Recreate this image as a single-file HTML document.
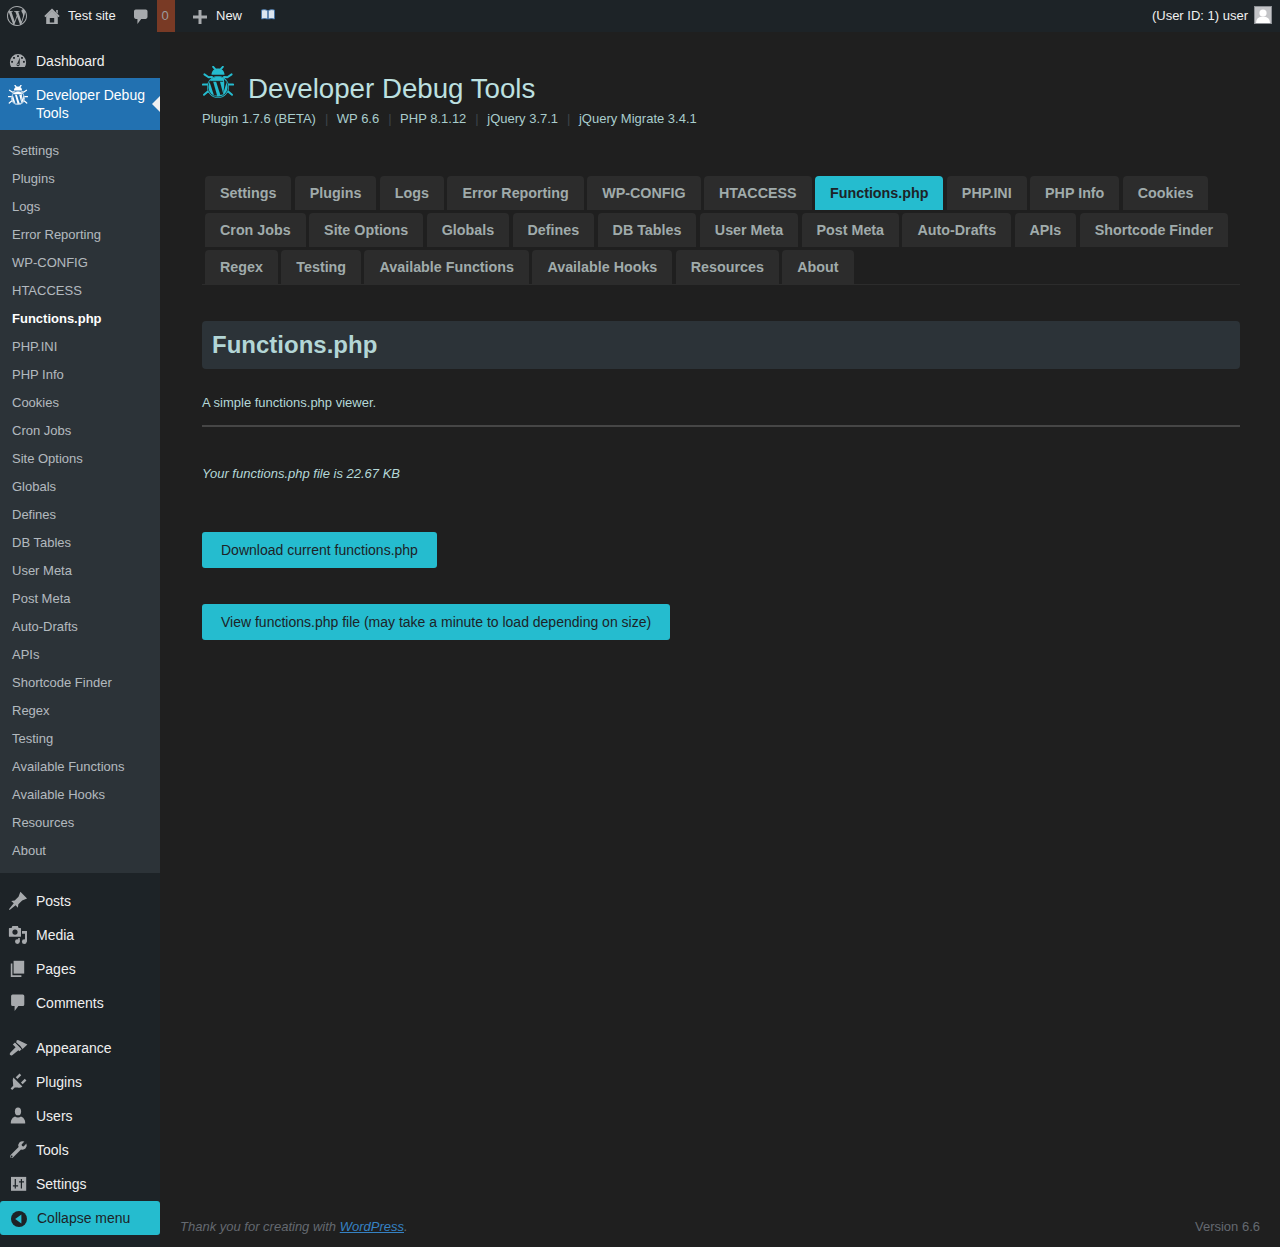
<!DOCTYPE html>
<html><head><meta charset="utf-8">
<style>
*{box-sizing:border-box;margin:0;padding:0}
html,body{width:1280px;height:1247px;overflow:hidden;background:#1f1f1f;font-family:"Liberation Sans",sans-serif;font-size:13px;color:#c3c4c7}
#bar{position:absolute;left:0;top:0;width:1280px;height:32px;background:#1d2327;color:#f0f0f0;font-size:13px}
#bar .t{position:absolute;top:0;line-height:32px;white-space:nowrap}
#bar svg{position:absolute}
#side{position:absolute;left:0;top:32px;width:160px;height:1215px;background:#1d2327}
.mi{position:absolute;left:0;width:160px;height:34px;color:#f0f0f0;font-size:14px;line-height:18px}
.mi .n{position:absolute;left:36px;top:8px;white-space:nowrap}
.mi svg{position:absolute;left:8px;top:7px;width:20px;height:20px}
#cur{position:absolute;left:0;top:78px;width:160px;height:52px;background:#2271b1;color:#fff;font-size:14px;line-height:18px}
#cur .n{position:absolute;left:36px;top:8px;width:120px}
#cur .arrow{position:absolute;right:0;top:18px;width:0;height:0;border:8px solid transparent;border-right-color:#f0f0f1}
#sub{position:absolute;left:0;top:130px;width:160px;height:743px;background:#2c3338}
#sub a{position:absolute;left:12px;display:block;font-size:13px;line-height:18px;color:rgba(240,246,252,.7);white-space:nowrap;text-decoration:none}
#sub a.on{color:#fff;font-weight:600}
#collapse{position:absolute;left:0;top:1201px;width:160px;height:34px;background:#25bccf;border-radius:3px;color:#1d2327;font-size:14px}
#collapse .n{position:absolute;left:37px;top:7.5px;line-height:18px}
#wrap{position:absolute;left:202px;top:32px;width:1038px}
h1.title{position:absolute;left:46px;top:39px;font-size:27.7px;font-weight:400;color:#bde0e0;line-height:36px;white-space:nowrap}
.ver{position:absolute;left:0;top:78px;font-size:13px;color:#a9cdcd;white-space:nowrap;line-height:18px}
.ver .sep{color:#3c434a;margin:0 8.5px 0 9px}
.tabs{position:absolute;left:0;top:144px;width:1038px;height:109px;border-bottom:1px solid #2c2c2c}
.trow{height:34px;margin-bottom:3px;padding-left:3px;display:flex;gap:3.4px}
.trow:last-child{margin-bottom:0}
.tab{position:relative;height:34px;background:#2c2c2c;border-radius:4px 4px 0 0;color:#a0abab;font-weight:700;font-size:14.3px;line-height:34px;padding:0 15px;white-space:nowrap}
.tab.on{background:#25bccf;color:#1d2327}
.hbox{position:absolute;left:0;top:289px;width:1038px;height:48px;background:#2c3338;border-radius:4px}
.hbox h2{position:absolute;left:10px;top:0;line-height:48px;font-size:24px;font-weight:700;color:#b3d6d6}
.desc{position:absolute;left:0;top:362px;line-height:18px;color:#b4d8d8;font-size:13px}
.hr{position:absolute;left:0;top:393px;width:1038px;height:2px;background:#464646}
.size{position:absolute;left:0;top:433px;line-height:18px;font-style:italic;color:#b4d8d8;font-size:13px}
.btn{position:absolute;left:0;height:36px;background:#25bccf;color:#1d2327;font-size:14px;line-height:36px;padding:0 19px;border-radius:3px;white-space:nowrap}
#foot{position:absolute;left:180px;top:1218px;width:1080px;line-height:18px;font-size:13px;color:#646970}
#foot i a{color:#3582c4;text-decoration:underline}
#foot .v{position:absolute;right:0;top:0}
</style></head><body>
<div id="bar">
  <svg style="left:7px;top:6px" width="20" height="20" viewBox="0 0 24 24"><path fill="#a7aaad" d="M21.469 6.825c.84 1.537 1.318 3.3 1.318 5.175 0 3.979-2.156 7.456-5.363 9.325l3.295-9.527c.615-1.54.82-2.771.82-3.864 0-.405-.026-.78-.07-1.11m-7.981.105c.647-.03 1.232-.105 1.232-.105.582-.075.514-.93-.067-.899 0 0-1.755.135-2.88.135-1.064 0-2.850-.15-2.85-.15-.585-.03-.661.855-.075.885 0 0 .54.061 1.125.09l1.68 4.605-2.37 7.08L5.354 6.9c.649-.03 1.234-.1 1.234-.1.585-.075.516-.93-.065-.896 0 0-1.746.138-2.874.138-.2 0-.438-.008-.69-.015C4.911 3.150 8.235 1.215 12 1.215c2.809 0 5.365 1.072 7.286 2.833-.046-.003-.091-.009-.141-.009-1.06 0-1.812.923-1.812 1.914 0 .89.513 1.643 1.06 2.531.411.72.89 1.643.89 2.977 0 .915-.354 1.994-.821 3.479l-1.075 3.585-3.9-11.61.001.014zM12 22.784c-1.059 0-2.081-.153-3.048-.437l3.237-9.406 3.315 9.087c.024.053.05.101.078.149-1.12.393-2.325.609-3.582.609M1.211 12c0-1.564.336-3.05.935-4.39L7.29 21.709C3.694 19.96 1.212 16.271 1.211 12M12 0C5.385 0 0 5.385 0 12s5.385 12 12 12 12-5.385 12-12S18.615 0 12 0"/></svg>
  <svg style="left:44px;top:8px" width="16" height="16" viewBox="0 0 16 16"><path d="M0.9 8.6 L8 1.6 L15.1 8.6" fill="none" stroke="#a7aaad" stroke-width="1.7"/><path d="M12.2 2 H13.8 V5.8 L12.2 4.3Z" fill="#a7aaad"/><path d="M2.2 8.2 L8 2.6 L13.8 8.2 V16 H2.2Z M5.8 10 V14.6 H10.2 V10Z" fill="#a7aaad" fill-rule="evenodd"/></svg>
  <span class="t" style="left:68px">Test site</span>
  <svg style="left:134px;top:9px" width="13.5" height="15.5" viewBox="0 0 15 16"><path d="M2 0 H13 Q15 0 15 2 V8.4 Q15 10.4 13 10.4 H8 L3.8 16 V10.4 H2 Q0 10.4 0 8.4 V2 Q0 0 2 0Z" fill="#a7aaad"/></svg>
  <div style="position:absolute;left:157px;top:0;width:18px;height:32px;background:#793a25"></div>
  <span class="t" style="left:161.5px;color:#9a9c9f">0</span>
  <svg style="left:193px;top:10px" width="14" height="14" viewBox="0 0 14 14"><path d="M5.5 0h3v5.5H14v3H8.5V14h-3V8.5H0v-3h5.5z" fill="#a7aaad"/></svg>
  <span class="t" style="left:216px">New</span>
  <svg style="left:261px;top:9px" width="14" height="11" viewBox="0 0 14 11"><path d="M0.5 1 Q3.5 0 6.8 1.5 L6.8 10 Q3.5 9 0.5 10Z M7.2 1.5 Q10.5 0 13.5 1 L13.5 10 Q10.5 9 7.2 10Z" fill="#dce6f0" stroke="#3a6ea8" stroke-width="0.8"/></svg>
  <span class="t" style="right:32px">(User ID: 1) user</span>
  <div style="position:absolute;left:1254px;top:6px;width:18px;height:18px;background:#c3c4c7;border:1px solid #8c8f94"><svg width="16" height="16" viewBox="0 0 16 16"><circle cx="8" cy="6" r="3.6" fill="#fff"/><path d="M1 16 Q1 9.5 8 9.5 Q15 9.5 15 16Z" fill="#fff"/></svg></div>
</div>

<div id="side">
  <div class="mi" style="top:12px"><svg viewBox="0 0 20 20"><path fill="#a7aaad" d="M3.2 16 H16.8 Q18.1 13.9 18.1 11.2 A8.1 8.1 0 0 0 1.9 11.2 Q1.9 13.9 3.2 16Z"/><g fill="#1d2327"><rect x="9.1" y="4.2" width="1.8" height="1.8"/><rect x="5.1" y="6" width="1.8" height="1.8"/><rect x="13.1" y="6" width="1.8" height="1.8"/><rect x="3.2" y="9.9" width="1.8" height="1.8"/><rect x="15" y="9.9" width="1.8" height="1.8"/><path d="M11.9 6.6 L11.6 14 Q11 15.4 9.8 15.2 Q8.4 14.9 8.6 13.4 Q8.9 12.4 9.8 11.6Z"/></g><circle cx="10" cy="13.4" r="0.8" fill="#a7aaad"/></svg><span class="n">Dashboard</span></div>
</div>
<div id="cur"><svg style="position:absolute;left:8px;top:7px" width="20" height="20" viewBox="0 0 32 32"><g stroke="#fff" stroke-width="2" stroke-linecap="round" stroke-linejoin="round" fill="none"><path d="M11.2 0.8 L13.4 3.4"/><path d="M20.8 0.8 L18.6 3.4"/><path d="M2.4 8.4 L6.6 11.3 L10 11"/><path d="M29.6 8.4 L25.4 11.3 L22 11"/><path d="M0.8 18.6 L5.4 18.6"/><path d="M26.6 18.6 L31.2 18.6"/><path d="M2 28.8 L5.8 25.6 L8 26"/><path d="M30 28.8 L26.2 25.6 L24 26"/></g><path d="M9.5 8.8 C9.5 4.6 12.4 2.4 16 2.4 C19.6 2.4 22.5 4.6 22.5 8.8 Z" fill="#fff"/><g transform="translate(5 10) scale(0.9167)"><circle cx="12" cy="12" r="12" fill="#fff"/><circle cx="12" cy="12" r="10.9" fill="none" stroke="#2271b1" stroke-width="0.8"/><path d="M2.9 5.3 A11.3 11.3 0 0 1 21.1 5.3Z" fill="#fff"/><path d="M3.4 5.3 H17.6 V6.2 H3.4Z" fill="#2271b1"/><path d="M2.6 5.6 L6.6 5.6 L11 21.4 L7.6 21.2Z" fill="#2271b1"/><path d="M9.8 5.8 L14 5.8 L17.8 20 L14.6 20.6Z" fill="#2271b1"/><path d="M18.4 3.4 C19.6 4.2 21 6 21.2 7.6 L17.6 19.4 C18.6 14 19.4 9 18.4 3.4Z" fill="#2271b1"/></g></svg><span class="n">Developer Debug Tools</span><div class="arrow"></div></div>
<div id="sub">
  <a style="top:12px">Settings</a>
  <a style="top:40px">Plugins</a>
  <a style="top:68px">Logs</a>
  <a style="top:96px">Error Reporting</a>
  <a style="top:124px">WP-CONFIG</a>
  <a style="top:152px">HTACCESS</a>
  <a class="on" style="top:180px">Functions.php</a>
  <a style="top:208px">PHP.INI</a>
  <a style="top:236px">PHP Info</a>
  <a style="top:264px">Cookies</a>
  <a style="top:292px">Cron Jobs</a>
  <a style="top:320px">Site Options</a>
  <a style="top:348px">Globals</a>
  <a style="top:376px">Defines</a>
  <a style="top:404px">DB Tables</a>
  <a style="top:432px">User Meta</a>
  <a style="top:460px">Post Meta</a>
  <a style="top:488px">Auto-Drafts</a>
  <a style="top:516px">APIs</a>
  <a style="top:544px">Shortcode Finder</a>
  <a style="top:572px">Regex</a>
  <a style="top:600px">Testing</a>
  <a style="top:628px">Available Functions</a>
  <a style="top:656px">Available Hooks</a>
  <a style="top:684px">Resources</a>
  <a style="top:712px">About</a>
</div>
<div class="mi" style="top:884px"><svg viewBox="0 0 20 20"><path transform="translate(1.3 18.6) rotate(-45)" fill="#a7aaad" d="M0 -0.5 L7.6 -1.3 L7.4 -4.7 L10.2 -2.6 L15.6 -2.6 L20.4 -4.7 L20.4 4.7 L15.6 2.6 L10.2 2.6 L7.4 4.7 L7.6 1.3 L0 0.5Z"/></svg><span class="n">Posts</span></div>
<div class="mi" style="top:918px"><svg viewBox="0 0 20 20"><g fill="#a7aaad"><path d="M0.9 3.6 Q0.9 3 1.5 3 H3.6 L4.4 0.9 H9.9 L10.6 3 H12.4 Q13 3 13 3.6 V11.2 Q13 11.8 12.4 11.8 H1.5 Q0.9 11.8 0.9 11.2Z"/><circle cx="7" cy="7.1" r="2.6" fill="#1d2327"/><path d="M14 5.9 H19 V16.8 H17 V8.7 H14Z"/><circle cx="16.3" cy="16.7" r="2.4"/><circle cx="9.4" cy="16.6" r="2.4"/><path d="M10.2 13 H11.8 V16.6 H10.2Z"/></g></svg><span class="n">Media</span></div>
<div class="mi" style="top:952px"><svg viewBox="0 0 20 20"><g fill="#a7aaad"><rect x="5.6" y="1.8" width="10.6" height="12.8"/><path d="M2.8 4.6 H4.4 V16.2 H13.4 V18 H2.8Z"/></g></svg><span class="n">Pages</span></div>
<div class="mi" style="top:986px"><svg viewBox="0 0 20 20"><path fill="#a7aaad" d="M4.6 1.6 H14.8 Q16.3 1.6 16.3 3.1 V11.6 Q16.3 13.1 14.8 13.1 H10.4 L6.6 18 V13.1 H4.6 Q3.1 13.1 3.1 11.6 V3.1 Q3.1 1.6 4.6 1.6Z"/></svg><span class="n">Comments</span></div>
<div class="mi" style="top:1031px"><svg viewBox="0 0 20 20"><g fill="#a7aaad"><path d="M8.6 2.4 Q9.4 1.8 10.6 2.2 L19.4 6.4 L14.4 11.2 Q12.6 7.4 8.2 4.4Z"/><path d="M4.8 6.6 L7 4.6 L13.6 11.2 L11.4 13.2 L10.4 12.3 L4.2 17.2 Q2.4 17.8 1.8 16.6 Q1.4 15.6 2.4 14.4 L7.6 9.3Z"/><path d="M7.4 4.2 L14.2 11" stroke="#1d2327" stroke-width="0.9"/></g></svg><span class="n">Appearance</span></div>
<div class="mi" style="top:1065px"><svg viewBox="0 0 20 20"><g fill="#a7aaad"><path d="M12.4 2.4 L8.6 6.2 M17.6 7.6 L13.8 11.4" stroke="#a7aaad" stroke-width="2.4"/><path d="M5.4 5.6 L14.4 14.6 Q12.4 16.4 9.6 15.6 L6.8 15.4 L4.2 18 L2.6 16.4 L5.2 13.8 L5 11 Q4.2 8 5.4 5.6Z"/></g></svg><span class="n">Plugins</span></div>
<div class="mi" style="top:1099px"><svg viewBox="0 0 20 20"><g fill="#a7aaad"><ellipse cx="10" cy="5.4" rx="3.1" ry="3.9"/><path d="M2.8 17.6 Q2.6 15.8 3.2 14.2 Q4.4 11.2 7 10.6 Q8.4 11.6 10 11.6 Q11.6 11.6 13 10.6 Q15.6 11.2 16.8 14.2 Q17.4 15.8 17.2 17.6Z"/></g></svg><span class="n">Users</span></div>
<div class="mi" style="top:1133px"><svg viewBox="0 0 20 20"><path fill="#a7aaad" d="M16.4 1.6 L13.6 4.4 L14 6 L15.6 6.4 L18.4 3.6 Q19.6 6.4 17.4 8.6 Q15.6 10.2 13 9.4 L5 17.4 Q3.6 18.6 2.4 17.6 Q1.4 16.4 2.6 15 L10.6 7 Q9.8 4.4 11.4 2.6 Q13.6 0.4 16.4 1.6Z M3.6 15.6 a0.9 0.9 0 1 0 0.01 0Z"/></svg><span class="n">Tools</span></div>
<div class="mi" style="top:1167px"><svg viewBox="0 0 20 20"><g><rect x="3" y="2.9" width="15.2" height="13.9" fill="#a7aaad"/><path d="M7.3 5 V14.6 M4.9 11.8 H10.1 M13.4 5 V14.6 M11 7.9 H16" stroke="#1d2327" stroke-width="1.2"/></g></svg><span class="n">Settings</span></div>
<div id="collapse"><svg style="position:absolute;left:11px;top:10px" width="16" height="16" viewBox="0 0 16 16"><circle cx="8" cy="8" r="8" fill="#1d2327"/><path d="M4.2 7.9 L10.4 3.4 V12.4Z" fill="#25bccf"/></svg><span class="n">Collapse menu</span></div>

<div id="wrap">
  <svg style="position:absolute;left:0;top:34px" width="32" height="32" viewBox="0 0 32 32"><g stroke="#25bccf" stroke-width="2" stroke-linecap="round" stroke-linejoin="round" fill="none"><path d="M11.2 0.8 L13.4 3.4"/><path d="M20.8 0.8 L18.6 3.4"/><path d="M2.4 8.4 L6.6 11.3 L10 11"/><path d="M29.6 8.4 L25.4 11.3 L22 11"/><path d="M0.8 18.6 L5.4 18.6"/><path d="M26.6 18.6 L31.2 18.6"/><path d="M2 28.8 L5.8 25.6 L8 26"/><path d="M30 28.8 L26.2 25.6 L24 26"/></g><path d="M9.5 8.8 C9.5 4.6 12.4 2.4 16 2.4 C19.6 2.4 22.5 4.6 22.5 8.8 Z" fill="#25bccf"/><g transform="translate(5 10) scale(0.9167)"><circle cx="12" cy="12" r="12" fill="#25bccf"/><circle cx="12" cy="12" r="10.9" fill="none" stroke="#1f1f1f" stroke-width="0.8"/><path d="M2.9 5.3 A11.3 11.3 0 0 1 21.1 5.3Z" fill="#25bccf"/><path d="M3.4 5.3 H17.6 V6.2 H3.4Z" fill="#1f1f1f"/><path d="M2.6 5.6 L6.6 5.6 L11 21.4 L7.6 21.2Z" fill="#1f1f1f"/><path d="M9.8 5.8 L14 5.8 L17.8 20 L14.6 20.6Z" fill="#1f1f1f"/><path d="M18.4 3.4 C19.6 4.2 21 6 21.2 7.6 L17.6 19.4 C18.6 14 19.4 9 18.4 3.4Z" fill="#1f1f1f"/></g></svg>
  <h1 class="title">Developer Debug Tools</h1>
  <div class="ver">Plugin 1.7.6 (BETA)<span class="sep">|</span>WP 6.6<span class="sep">|</span>PHP 8.1.12<span class="sep">|</span>jQuery 3.7.1<span class="sep">|</span>jQuery Migrate 3.4.1</div>
  <div class="tabs">
<div class="trow"><span class="tab">Settings</span><span class="tab">Plugins</span><span class="tab">Logs</span><span class="tab">Error Reporting</span><span class="tab">WP-CONFIG</span><span class="tab">HTACCESS</span><span class="tab on">Functions.php</span><span class="tab">PHP.INI</span><span class="tab">PHP Info</span><span class="tab">Cookies</span></div>
<div class="trow"><span class="tab">Cron Jobs</span><span class="tab">Site Options</span><span class="tab">Globals</span><span class="tab">Defines</span><span class="tab">DB Tables</span><span class="tab">User Meta</span><span class="tab">Post Meta</span><span class="tab">Auto-Drafts</span><span class="tab">APIs</span><span class="tab">Shortcode Finder</span></div>
<div class="trow"><span class="tab">Regex</span><span class="tab">Testing</span><span class="tab">Available Functions</span><span class="tab">Available Hooks</span><span class="tab">Resources</span><span class="tab">About</span></div>
  </div>
  <div class="hbox"><h2>Functions.php</h2></div>
  <div class="desc">A simple functions.php viewer.</div>
  <div class="hr"></div>
  <div class="size">Your functions.php file is 22.67 KB</div>
  <div class="btn" style="top:500px">Download current functions.php</div>
  <div class="btn" style="top:572px">View functions.php file (may take a minute to load depending on size)</div>
</div>
<div id="foot"><i>Thank you for creating with <a>WordPress</a>.</i><span class="v">Version 6.6</span></div>
</body></html>
